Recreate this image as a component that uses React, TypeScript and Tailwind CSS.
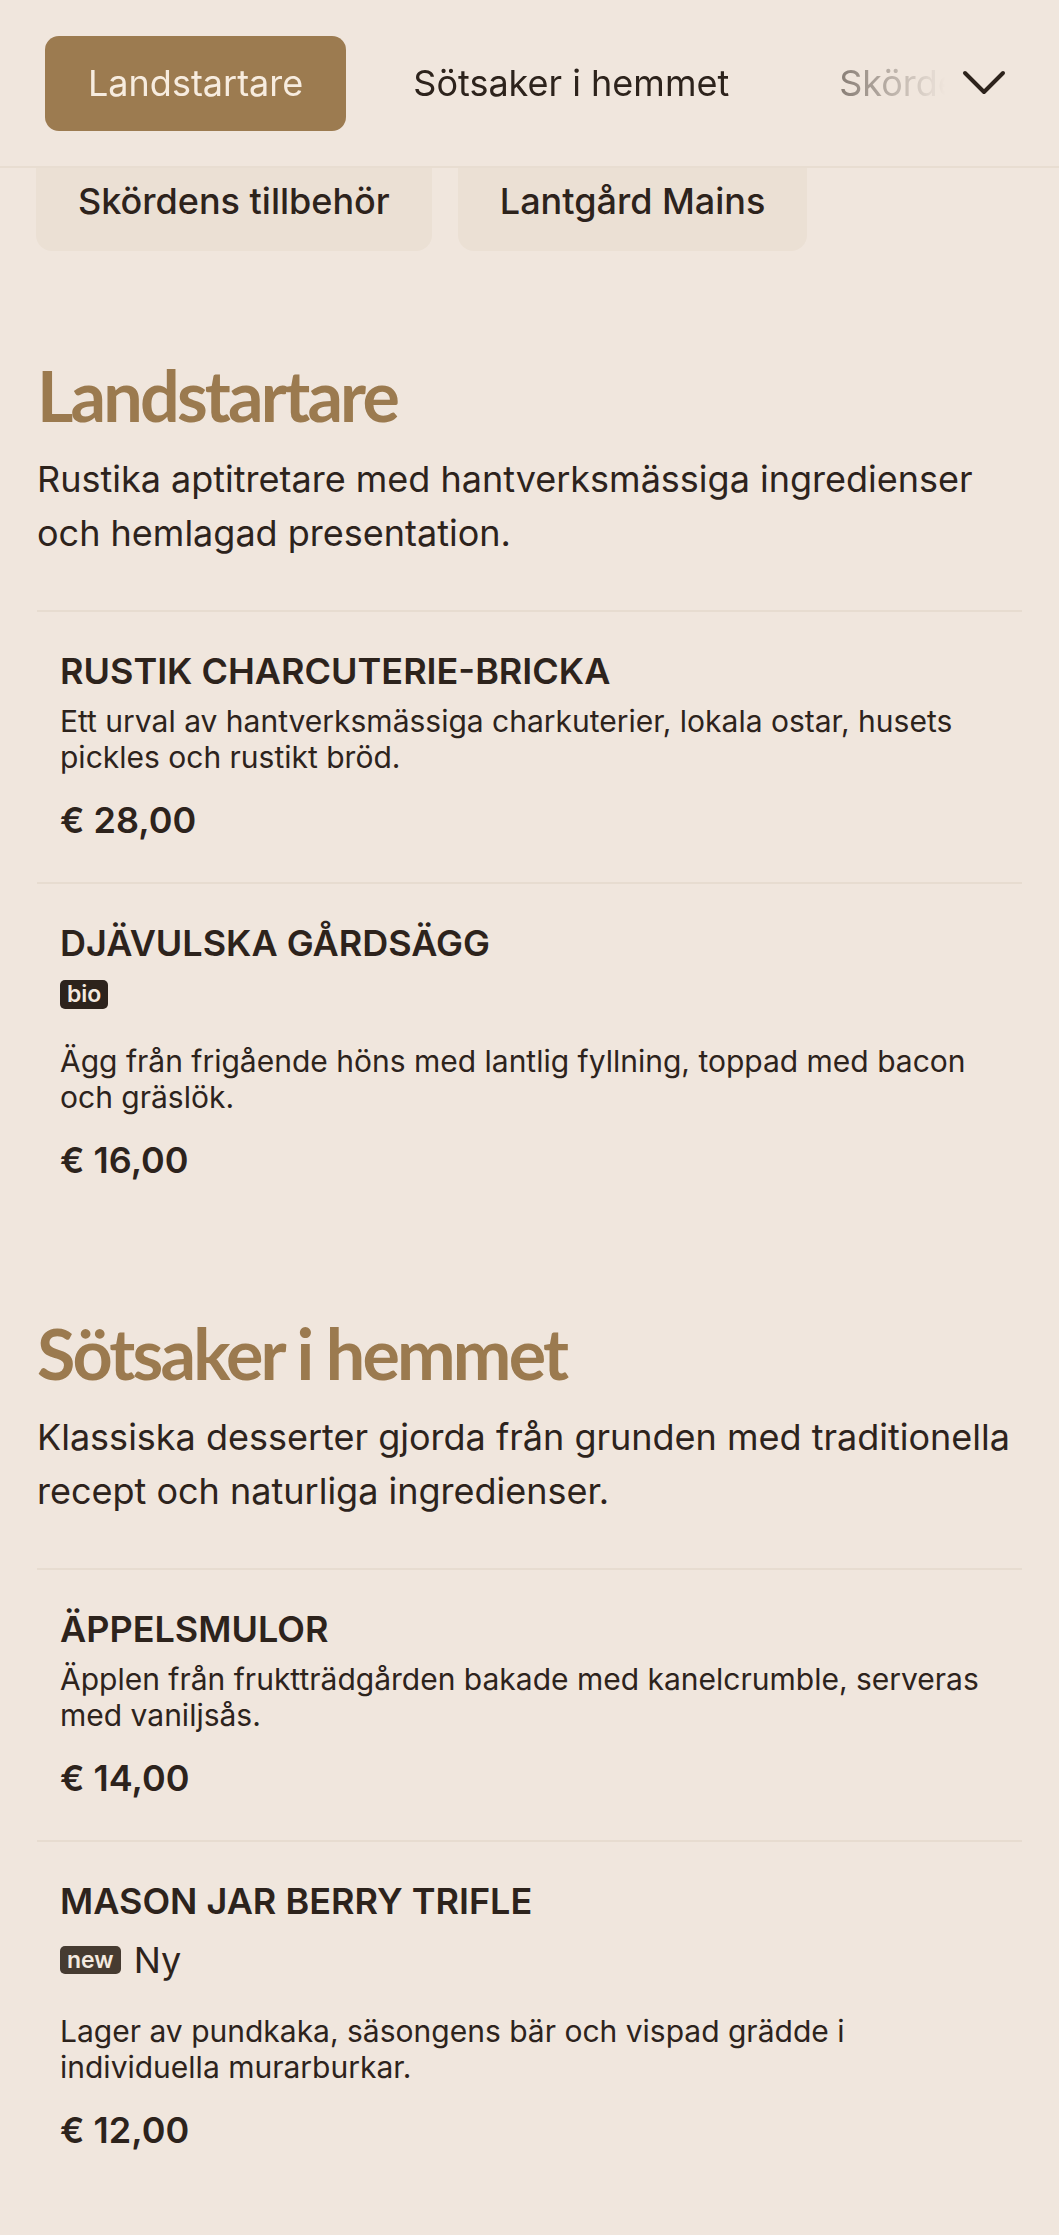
import { ReactNode } from "react";

type Item = {
    name: string;
    desc: string;
    price: string;
    badge?: string;
    badgeLabel?: string;
};

type Section = {
    title: string;
    intro: string;
    items: Item[];
};

const sections: Section[] = [
    {
        title: "Landstartare",
        intro: "Rustika aptitretare med hantverksmässiga ingredienser och hemlagad presentation.",
        items: [
            {
                name: "RUSTIK CHARCUTERIE-BRICKA",
                desc: "Ett urval av hantverksmässiga charkuterier, lokala ostar, husets pickles och rustikt bröd.",
                price: "€ 28,00",
            },
            {
                name: "DJÄVULSKA GÅRDSÄGG",
                desc: "Ägg från frigående höns med lantlig fyllning, toppad med bacon och gräslök.",
                price: "€ 16,00",
                badge: "bio",
            },
        ],
    },
    {
        title: "Sötsaker i hemmet",
        intro: "Klassiska desserter gjorda från grunden med traditionella recept och naturliga ingredienser.",
        items: [
            {
                name: "ÄPPELSMULOR",
                desc: "Äpplen från fruktträdgården bakade med kanelcrumble, serveras med vaniljsås.",
                price: "€ 14,00",
            },
            {
                name: "MASON JAR BERRY TRIFLE",
                desc: "Lager av pundkaka, säsongens bär och vispad grädde i individuella murarburkar.",
                price: "€ 12,00",
                badge: "new",
                badgeLabel: "Ny",
            },
        ],
    },
];

function Badge({ children, tone }: { children: ReactNode; tone: "dark" | "soft" }) {
    return (
        <span
            className={
                tone === "dark"
                    ? "inline-flex h-[29px] items-center rounded-[5px] bg-[#2d231c] px-[7px] text-[23px] leading-none font-semibold text-[#f3e9df]"
                    : "inline-flex h-[28px] items-center rounded-[5px] bg-[#463b31] px-[7px] text-[23px] leading-none font-semibold text-[#f3e9df]"
            }
        >
            {children}
        </span>
    );
}

function MenuItem({ item }: { item: Item }) {
    return (
        <div className="border-t-2 border-[#e7dcd0] px-[23px] pt-[36px] pb-[35px]">
            <h3 className="text-[36px] leading-[47px] font-semibold text-[#2d231c]">{item.name}</h3>
            {item.badge && !item.badgeLabel && (
                <div className="mt-[13px] flex">
                    <Badge tone="dark">{item.badge}</Badge>
                </div>
            )}
            {item.badge && item.badgeLabel && (
                <div className="mt-[8px] flex h-[54px] items-center gap-[13px]">
                    <Badge tone="soft">{item.badge}</Badge>
                    <span className="text-[36px] leading-[54px] text-[#2d231c]">{item.badgeLabel}</span>
                </div>
            )}
            <p
                className={
                    item.badge
                        ? item.badgeLabel
                            ? "mt-[26px] text-[30px] leading-[36px] text-[#2d231c]"
                            : "mt-[34px] text-[30px] leading-[36px] text-[#2d231c]"
                        : "mt-[8px] text-[30px] leading-[36px] text-[#2d231c]"
                }
            >
                {item.desc}
            </p>
            <div className="mt-[18px] text-[36px] leading-[54px] font-semibold text-[#2d231c]">{item.price}</div>
        </div>
    );
}

export default function App() {
    return (
        <div
            className="min-h-screen bg-[#f0e6dd] text-[#2d231c]"
            style={{ fontFamily: "Inter, 'Noto Sans', sans-serif" }}
        >
            <header className="flex h-[168px] items-center border-b-2 border-[#e8ddd1] pl-[45px] pr-[37px]">
                <nav className="flex min-w-0 flex-1 items-center gap-[24px] overflow-hidden whitespace-nowrap [mask-image:linear-gradient(to_right,#000_78%,transparent_100%)]">
                    <button className="flex h-[95px] shrink-0 items-center rounded-[14px] bg-[#9c7b50] px-[43px] text-[36px] text-[#f7ecdf]">
                        Landstartare
                    </button>
                    <button className="flex h-[95px] shrink-0 items-center px-[43px] text-[36px] text-[#2d231c]">
                        Sötsaker i hemmet
                    </button>
                    <button className="flex h-[95px] shrink-0 items-center px-[43px] text-[36px] text-[#2d231c]">
                        Skördens tillbehör
                    </button>
                </nav>
                <button className="flex w-[77px] shrink-0 items-center justify-center">
                    <svg width="44" height="26" viewBox="0 0 44 26" fill="none">
                        <polyline
                            points="3,3 22,22 41,3"
                            stroke="#2d231c"
                            strokeWidth="4"
                            strokeLinecap="round"
                            strokeLinejoin="round"
                        />
                    </svg>
                </button>
            </header>

            <div className="flex gap-[26px] px-[36px]">
                <div className="flex h-[83px] items-end rounded-b-[16px] bg-[#ebe0d4] px-[42px] pb-[23px] text-[36px] font-medium text-[#2d231c]">
                    Skördens tillbehör
                </div>
                <div className="flex h-[83px] items-end rounded-b-[16px] bg-[#ebe0d4] px-[42px] pb-[23px] text-[36px] font-medium text-[#2d231c]">
                    Lantgård Mains
                </div>
            </div>

            <main className="px-[37px] pb-[42px]">
                {sections.map((s, i) => (
                    <section key={s.title} className={i === 0 ? "pt-[101px]" : "pt-[88px]"}>
                        <h2
                            className="text-[70px] leading-[86px] font-bold tracking-[-0.04em] text-[#9b7a4f]"
                            style={{ fontFamily: "Lato, 'Noto Sans', sans-serif" }}
                        >
                            {s.title}
                        </h2>
                        <p className="mt-[14px] text-[36px] leading-[54px] text-[#2d231c]">{s.intro}</p>
                        <div className="mt-[50px]">
                            {s.items.map(item => (
                                <MenuItem key={item.name} item={item} />
                            ))}
                        </div>
                    </section>
                ))}
            </main>
        </div>
    );
}
